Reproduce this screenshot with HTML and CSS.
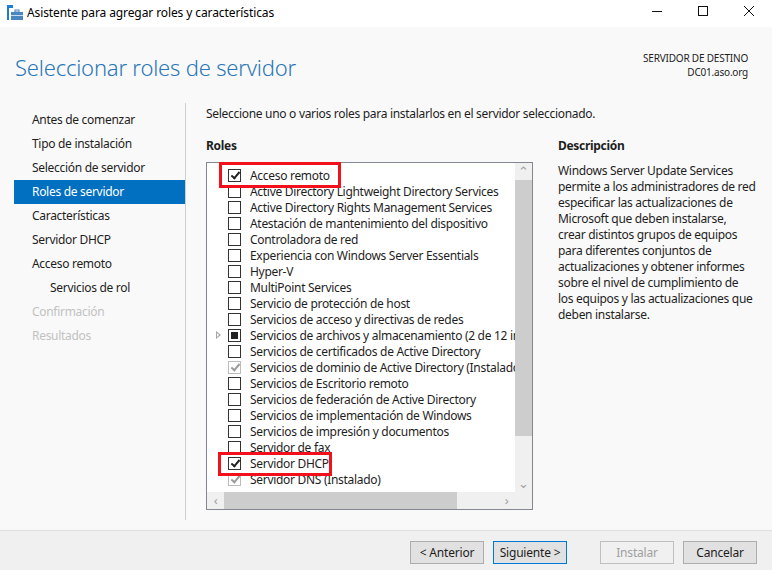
FILE: index.html
```html
<!DOCTYPE html>
<html lang="es">
<head>
    <meta charset="UTF-8">
    <title>Asistente para agregar roles y características</title>
    <link rel="stylesheet" href="styles.css">
</head>
<body>
    <div class="title-bar">
        <svg class="app-icon" width="16" height="16" viewBox="0 0 16 16">
            <rect x="0" y="0" width="6" height="3" fill="#1a7fd4"/>
            <rect x="0" y="3" width="2" height="12" fill="#1a7fd4"/>
            <rect x="4" y="7" width="12" height="8" fill="#4a86c0"/>
            <rect x="8" y="5" width="4" height="2" fill="none" stroke="#4a86c0" stroke-width="1"/>
            <rect x="4" y="10" width="12" height="1" fill="#c8dcef"/>
        </svg>
        <span class="title-text">Asistente para agregar roles y características</span>
        <div class="window-controls">
            <span class="win-btn">
                <svg width="10" height="10" viewBox="0 0 10 10"><path d="M0 5.5 H10" stroke="#111" stroke-width="1"/></svg>
            </span>
            <span class="win-btn">
                <svg width="10" height="10" viewBox="0 0 10 10"><rect x="0.5" y="0.5" width="9" height="9" fill="none" stroke="#111" stroke-width="1"/></svg>
            </span>
            <span class="win-btn">
                <svg width="10" height="10" viewBox="0 0 10 10"><path d="M0 0 L10 10 M10 0 L0 10" stroke="#111" stroke-width="1"/></svg>
            </span>
        </div>
    </div>

    <div class="wizard">
        <div class="header">
            <h1 class="page-title">Seleccionar roles de servidor</h1>
            <div class="target">
                <div>SERVIDOR DE DESTINO</div>
                <div>DC01.aso.org</div>
            </div>
        </div>

        <div class="main">
            <div class="nav">
                <div class="nav-item">Antes de comenzar</div>
                <div class="nav-item">Tipo de instalación</div>
                <div class="nav-item">Selección de servidor</div>
                <div class="nav-item active">Roles de servidor</div>
                <div class="nav-item">Características</div>
                <div class="nav-item">Servidor DHCP</div>
                <div class="nav-item">Acceso remoto</div>
                <div class="nav-item sub">Servicios de rol</div>
                <div class="nav-item disabled">Confirmación</div>
                <div class="nav-item disabled">Resultados</div>
            </div>

            <div class="page">
                <p class="intro">Seleccione uno o varios roles para instalarlos en el servidor seleccionado.</p>
                <div class="columns">
                    <div class="roles-col">
                        <div class="col-title">Roles</div>
                        <div class="listbox">
                            <div class="rows">
                                <div class="row"><span class="expander"></span><span class="check checked"></span><span class="label">Acceso remoto</span></div>
                                <div class="row"><span class="expander"></span><span class="check"></span><span class="label">Active Directory Lightweight Directory Services</span></div>
                                <div class="row"><span class="expander"></span><span class="check"></span><span class="label">Active Directory Rights Management Services</span></div>
                                <div class="row"><span class="expander"></span><span class="check"></span><span class="label">Atestación de mantenimiento del dispositivo</span></div>
                                <div class="row"><span class="expander"></span><span class="check"></span><span class="label">Controladora de red</span></div>
                                <div class="row"><span class="expander"></span><span class="check"></span><span class="label">Experiencia con Windows Server Essentials</span></div>
                                <div class="row"><span class="expander"></span><span class="check"></span><span class="label">Hyper-V</span></div>
                                <div class="row"><span class="expander"></span><span class="check"></span><span class="label">MultiPoint Services</span></div>
                                <div class="row"><span class="expander"></span><span class="check"></span><span class="label">Servicio de protección de host</span></div>
                                <div class="row"><span class="expander"></span><span class="check"></span><span class="label">Servicios de acceso y directivas de redes</span></div>
                                <div class="row"><span class="expander has-children"></span><span class="check partial"></span><span class="label">Servicios de archivos y almacenamiento (2 de 12 instalados)</span></div>
                                <div class="row"><span class="expander"></span><span class="check"></span><span class="label">Servicios de certificados de Active Directory</span></div>
                                <div class="row"><span class="expander"></span><span class="check installed"></span><span class="label">Servicios de dominio de Active Directory (Instalado)</span></div>
                                <div class="row"><span class="expander"></span><span class="check"></span><span class="label">Servicios de Escritorio remoto</span></div>
                                <div class="row"><span class="expander"></span><span class="check"></span><span class="label">Servicios de federación de Active Directory</span></div>
                                <div class="row"><span class="expander"></span><span class="check"></span><span class="label">Servicios de implementación de Windows</span></div>
                                <div class="row"><span class="expander"></span><span class="check"></span><span class="label">Servicios de impresión y documentos</span></div>
                                <div class="row"><span class="expander"></span><span class="check"></span><span class="label">Servidor de fax</span></div>
                                <div class="row"><span class="expander"></span><span class="check checked"></span><span class="label">Servidor DHCP</span></div>
                                <div class="row"><span class="expander"></span><span class="check installed"></span><span class="label">Servidor DNS (Instalado)</span></div>
                            </div>
                            <div class="vscroll">
                                <span class="arrow">&#8963;</span>
                                <div class="track"><div class="thumb"></div></div>
                                <span class="arrow">&#8964;</span>
                            </div>
                            <div class="hscroll">
                                <span class="arrow">&lsaquo;</span>
                                <div class="track"><div class="thumb"></div></div>
                                <span class="arrow">&rsaquo;</span>
                            </div>
                            <div class="corner"></div>
                            <!-- red highlight boxes drawn over the list -->
                            <div class="highlight hl-acceso"></div>
                            <div class="highlight hl-dhcp"></div>
                        </div>
                    </div>
                    <div class="desc-col">
                        <div class="col-title">Descripción</div>
                        <p class="desc-text">Windows Server Update Services<br>permite a los administradores de red<br>especificar las actualizaciones de<br>Microsoft que deben instalarse,<br>crear distintos grupos de equipos<br>para diferentes conjuntos de<br>actualizaciones y obtener informes<br>sobre el nivel de cumplimiento de<br>los equipos y las actualizaciones que<br>deben instalarse.</p>
                    </div>
                </div>
            </div>
        </div>

        <div class="footer">
            <button class="btn">&lt; Anterior</button>
            <button class="btn default">Siguiente &gt;</button>
            <button class="btn disabled">Instalar</button>
            <button class="btn">Cancelar</button>
        </div>
    </div>
</body>
</html>
```

FILE: styles.css
```css
* {
    box-sizing: border-box;
}
body {
    margin: 0;
    width: 772px;
    height: 570px;
    overflow: hidden;
    display: flex;
    flex-direction: column;
    font-family: "Noto Sans", "Open Sans", sans-serif;
    font-size: 12px;
    letter-spacing: -0.3px;
    color: #1e1e1e;
    background-color: #f9f9f9;
}

/* window title bar */
.title-bar {
    height: 27px;
    background-color: #ffffff;
    display: flex;
    align-items: center;
    padding-left: 7px;
}
.app-icon {
    margin-top: -2px;
}
.title-text {
    margin-left: 4px;
    margin-top: -3px;
    color: #000;
    letter-spacing: -0.1px;
}
.window-controls {
    margin-left: auto;
    display: flex;
    margin-top: -5px;
}
.win-btn {
    width: 46px;
    height: 22px;
    display: flex;
    align-items: center;
    justify-content: center;
}

.wizard {
    flex: 1;
    display: flex;
    flex-direction: column;
}

/* header */
.header {
    height: 76px;
    display: flex;
    justify-content: space-between;
    padding: 24px 24px 0 15px;
}
.page-title {
    margin: 0;
    font-size: 22px;
    font-weight: 300;
    line-height: 32px;
    letter-spacing: -0.2px;
    color: #2a76b8;
}
.target {
    text-align: right;
    font-size: 10px;
    line-height: 14px;
    letter-spacing: -0.2px;
    color: #1e1e1e;
}

/* body */
.main {
    flex: 1;
    display: flex;
}
.nav {
    width: 172px;
    margin-left: 14px;
    padding-top: 5px;
    border-right: 1px solid #cfcfcf;
    margin-bottom: 10px;
}
.nav-item {
    height: 24px;
    line-height: 24px;
    padding-left: 18px;
    color: #1e1e1e;
}
.nav-item.active {
    background-color: #0170c1;
    color: #fff;
}
.nav-item.sub {
    padding-left: 36px;
}
.nav-item.disabled {
    color: #c2c2c2;
}

.page {
    flex: 1;
    padding-left: 20px;
    padding-top: 3px;
}
.intro {
    margin: 0 0 16px 0;
    line-height: 16px;
}
.columns {
    display: flex;
}
.col-title {
    font-weight: bold;
    line-height: 16px;
    margin-bottom: 8px;
}
.roles-col {
    width: 327px;
}
.desc-col {
    margin-left: 25px;
}
.desc-text {
    margin: 0;
    padding-top: 1px;
    line-height: 16px;
}

/* role list */
.listbox {
    position: relative;
    width: 327px;
    height: 348px;
    border: 1px solid #828790;
    background-color: #fff;
    display: grid;
    grid-template-columns: 1fr 17px;
    grid-template-rows: 1fr 17px;
}
.rows {
    padding-top: 4px;
    overflow: hidden;
}
.row {
    height: 16px;
    display: flex;
    align-items: center;
    white-space: nowrap;
}
.expander {
    width: 21px;
    height: 16px;
    flex-shrink: 0;
    position: relative;
}
.expander.has-children::after {
    content: "";
    position: absolute;
    left: 9px;
    top: 4px;
    border-style: solid;
    border-width: 4px 0 4px 5px;
    border-color: transparent transparent transparent #a6a6a6;
}
.expander.has-children::before {
    content: "";
    position: absolute;
    left: 10px;
    top: 6px;
    z-index: 1;
    border-style: solid;
    border-width: 2px 0 2px 2.5px;
    border-color: transparent transparent transparent #fff;
}
.check {
    width: 13px;
    height: 13px;
    border: 1px solid #333;
    background-color: #fff;
    flex-shrink: 0;
    position: relative;
}
.check.checked::after,
.check.installed::after {
    content: "";
    position: absolute;
    left: 3.5px;
    top: 0.5px;
    width: 3px;
    height: 7px;
    border-right: 2px solid #222;
    border-bottom: 2px solid #222;
    transform: rotate(40deg);
}
.check.installed {
    border-color: #bcbcbc;
}
.check.installed::after {
    border-color: #9a9a9a;
}
.check.partial::after {
    content: "";
    position: absolute;
    left: 2px;
    top: 2px;
    width: 7px;
    height: 7px;
    background-color: #222;
}
.label {
    margin-left: 9px;
    color: #1e1e1e;
}

.vscroll {
    background-color: #f0f0f0;
    display: flex;
    flex-direction: column;
}
.vscroll .track {
    flex: 1;
    padding: 0;
}
.vscroll .thumb {
    height: 256px;
    background-color: #cdcdcd;
}
.hscroll {
    background-color: #f0f0f0;
    display: flex;
}
.hscroll .track {
    flex: 1;
}
.hscroll .thumb {
    width: 233px;
    height: 17px;
    background-color: #cdcdcd;
}
.arrow {
    width: 17px;
    height: 17px;
    line-height: 17px;
    text-align: center;
    color: #a0a0a0;
    font-size: 13px;
    flex-shrink: 0;
}
.corner {
    background-color: #f0f0f0;
}

.highlight {
    position: absolute;
    border: 3px solid #f2111a;
}
.hl-acceso {
    left: 12px;
    top: -1px;
    width: 122px;
    height: 26px;
}
.hl-dhcp {
    left: 11px;
    top: 289px;
    width: 114px;
    height: 24px;
}

/* footer buttons */
.footer {
    height: 40px;
    border-top: 1px solid #dfdfdf;
    background-color: #f0f0f0;
    display: flex;
    justify-content: flex-end;
    padding: 10px 15px 0 0;
}
.btn {
    width: 74px;
    height: 23px;
    margin-left: 9px;
    font-family: inherit;
    font-size: 12px;
    letter-spacing: -0.2px;
    color: #1e1e1e;
    background-color: #e1e1e1;
    border: 1px solid #adadad;
    padding: 0;
}
.btn.default {
    border-color: #0078d7;
}
.btn.disabled {
    margin-left: 33px;
    color: #a0a0a0;
    background-color: #f0f0f0;
    border-color: #bfbfbf;
}
```
